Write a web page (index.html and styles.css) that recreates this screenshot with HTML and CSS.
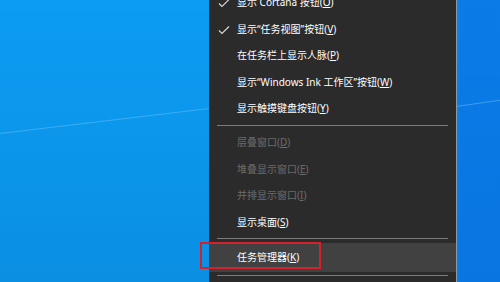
FILE: index.html
```html
<!DOCTYPE html>
<html>
<head>
    <link rel="stylesheet" href="styles.css">
</head>
<body>
<div class="desktop">
    <div class="streak streak-left"></div>
    <div class="streak streak-right"></div>

    <ul class="menu">
        <li class="item checked">
            <svg class="check" viewBox="0 0 12 10" width="12" height="10"><path d="M1 5.5 L4 8.5 L11 1.5"/></svg>
            显示 Cortana 按钮(<u>O</u>)
        </li>
        <li class="item checked">
            <svg class="check" viewBox="0 0 12 10" width="12" height="10"><path d="M1 5.5 L4 8.5 L11 1.5"/></svg>
            显示“任务视图”按钮(<u>V</u>)
        </li>
        <li class="item">在任务栏上显示人脉(<u>P</u>)</li>
        <li class="item">显示“Windows Ink 工作区”按钮(<u>W</u>)</li>
        <li class="item">显示触摸键盘按钮(<u>Y</u>)</li>
        <li class="sep"></li>
        <li class="item disabled">层叠窗口(<u>D</u>)</li>
        <li class="item disabled">堆叠显示窗口(<u>E</u>)</li>
        <li class="item disabled">并排显示窗口(<u>I</u>)</li>
        <li class="item">显示桌面(<u>S</u>)</li>
        <li class="sep"></li>
        <li class="item hover">任务管理器(<u>K</u>)</li>
        <li class="sep"></li>
        <li class="item"></li>
    </ul>

    <div class="callout"></div>
</div>
</body>
</html>
```

FILE: styles.css
```css
html, body {
    margin: 0;
    padding: 0;
}

body {
    width: 500px;
    height: 282px;
    overflow: hidden;
    font-family: "Noto Sans", "Noto Sans CJK SC", sans-serif;
}

.desktop {
    position: relative;
    width: 500px;
    height: 282px;
    background:
        linear-gradient(to right, rgba(8, 90, 220, 0) 0px, rgba(8, 90, 220, 0) 450px, rgba(8, 96, 222, 0.55) 460px),
        linear-gradient(180deg, #0c9cf2 0%, #0b97ec 45%, #0a8fe3 100%);
    overflow: hidden;
}

/* faint light streaks of the wallpaper */
.streak {
    position: absolute;
    height: 1px;
    background: rgba(120, 200, 255, 0.45);
    transform-origin: left center;
}

.streak-left {
    left: 0;
    top: 133px;
    width: 215px;
    transform: rotate(-6.8deg);
}

.streak-right {
    left: 456px;
    top: 106px;
    width: 50px;
    transform: rotate(-8deg);
}

.menu {
    position: absolute;
    left: 209px;
    top: -11px;
    width: 247px;
    margin: 0;
    padding: 0;
    list-style: none;
    background: #2b2b2b;
    border-right: 1px solid #8b98a3;
    color: #fff;
    font-size: 10px;
}

.item {
    position: relative;
    height: 26.5px;
    line-height: 26.5px;
    padding-left: 28px;
    white-space: nowrap;
}

.item u {
    text-decoration-thickness: 1px;
    text-underline-offset: 1px;
}

.item.disabled {
    color: #6b6b6b;
}

.item.hover {
    background: #414141;
    height: 29px;
    line-height: 29px;
}

.check {
    position: absolute;
    left: 9px;
    top: 9px;
}

.check path {
    fill: none;
    stroke: #d8d8d8;
    stroke-width: 1.1;
}

.sep {
    height: 7.5px;
    position: relative;
}

.sep::after {
    content: "";
    position: absolute;
    left: 8px;
    right: 8px;
    top: 3px;
    height: 1px;
    background: #7c7c7c;
}

.callout {
    position: absolute;
    left: 200px;
    top: 242px;
    width: 117px;
    height: 23px;
    border: 2px solid #d3222c;
}
```
